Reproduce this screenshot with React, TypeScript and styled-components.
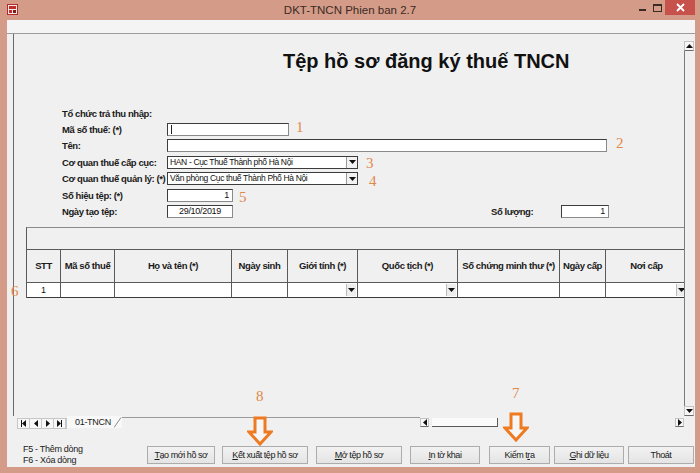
import styled, { createGlobalStyle } from 'styled-components';

const SANS = `"Liberation Sans", Arial, sans-serif`;
const SERIF = `"Liberation Serif", "Times New Roman", serif`;
const FRAME = '#d49c88';
const ORANGE = '#e0894a';

const GlobalStyle = createGlobalStyle`
  html, body { margin: 0; padding: 0; background: ${FRAME}; }
  body { width: 700px; height: 473px; overflow: hidden; }
`;

interface Column {
    title: string;
    width: number;
    dropdown?: boolean;
}

const columns: Column[] = [
    { title: 'STT', width: 34 },
    { title: 'Mã số thuế', width: 54 },
    { title: 'Họ và tên (*)', width: 117 },
    { title: 'Ngày sinh', width: 56 },
    { title: 'Giới tính (*)', width: 70, dropdown: true },
    { title: 'Quốc tịch (*)', width: 100, dropdown: true },
    { title: 'Số chứng minh thư (*)', width: 102 },
    { title: 'Ngày cấp', width: 46 },
    { title: 'Nơi cấp', width: 82, dropdown: true },
];

interface FooterButton {
    key: string;
    label: React.ReactNode;
    width: number;
    gap: number;
}

const buttons: FooterButton[] = [
    { key: 'tao', label: <><u>T</u>ạo mới hồ sơ</>, width: 68, gap: 0 },
    { key: 'ket', label: <><u>K</u>ết xuất tệp hồ sơ</>, width: 86, gap: 7 },
    { key: 'mo', label: <><u>M</u>ở tệp hồ sơ</>, width: 86, gap: 8 },
    { key: 'in', label: <><u>I</u>n tờ khai</>, width: 70, gap: 8 },
    { key: 'kiem', label: <>Kiểm t<u>r</u>a</>, width: 61, gap: 9 },
    { key: 'ghi', label: <><u>G</u>hi dữ liệu</>, width: 70, gap: 4 },
    { key: 'thoat', label: <>Thoát</>, width: 66, gap: 4 },
];

const notes = [
    { n: '1', x: 296, y: 120 },
    { n: '2', x: 616, y: 136 },
    { n: '3', x: 366, y: 156 },
    { n: '4', x: 369, y: 174 },
    { n: '5', x: 239, y: 190 },
    { n: '6', x: 11, y: 284 },
    { n: '7', x: 512, y: 386 },
    { n: '8', x: 256, y: 389 },
];

function Tri({ dir }: { dir: 'up' | 'down' | 'left' | 'right' }) {
    const pts = {
        up: '0,4 3.5,0 7,4',
        down: '0,0 7,0 3.5,4',
        left: '4,0 4,7 0,3.5',
        right: '0,0 0,7 4,3.5',
    }[dir];
    const vertical = dir === 'up' || dir === 'down';
    return (
        <svg width={vertical ? 7 : 4} height={vertical ? 4 : 7} viewBox={vertical ? '0 0 7 4' : '0 0 4 7'}>
            <polygon points={pts} fill="#111" />
        </svg>
    );
}

function DownArrow() {
    return (
        <svg width="26" height="30" viewBox="0 0 26 30">
            <path d="M8 2 H18 V16 H24 L13 28 L2 16 H8 Z" fill="#f6f6f6" stroke="#ee7a22" strokeWidth="3" strokeLinejoin="miter" />
        </svg>
    );
}

export default function App() {
    return (
        <Window>
            <GlobalStyle />
            <TitleBar>
                <TitleLeft>
                    <svg width="11" height="11" viewBox="0 0 11 11">
                        <rect x="0.5" y="0.5" width="10" height="10" fill="#f4e9e6" stroke="#b32a2a" />
                        <rect x="2" y="2" width="7" height="3" fill="#c22b2b" />
                        <rect x="2" y="6" width="3" height="3" fill="#c22b2b" />
                        <rect x="6" y="6" width="3" height="3" fill="#7a1d1d" />
                    </svg>
                </TitleLeft>
                <TitleText>DKT-TNCN Phien ban 2.7</TitleText>
                <Controls>
                    <Ctrl>
                        <svg width="8" height="8" viewBox="0 0 8 8"><rect x="0" y="5" width="7" height="2" fill="#3a2a25" /></svg>
                    </Ctrl>
                    <Ctrl>
                        <svg width="9" height="8" viewBox="0 0 9 8"><rect x="0.5" y="0.5" width="8" height="7" fill="none" stroke="#3a2a25" /><rect x="0.5" y="0.5" width="8" height="1.5" fill="#3a2a25" /></svg>
                    </Ctrl>
                    <Close>
                        <svg width="9" height="9" viewBox="0 0 9 9"><path d="M1 1 L8 8 M8 1 L1 8" stroke="#fff" strokeWidth="1.8" /></svg>
                    </Close>
                </Controls>
            </TitleBar>
            <Client>
                <TopStrip />
                <Body>
                    <Sheet>
                        <Heading>Tệp hồ sơ đăng ký thuế TNCN</Heading>
                        <Form>
                            <Row>
                                <Label>Tổ chức trả thu nhập:</Label>
                            </Row>
                            <Row>
                                <Label>Mã số thuế: (*)</Label>
                                <Input $w={122}><Caret /></Input>
                            </Row>
                            <Row>
                                <Label>Tên:</Label>
                                <Input $w={440} />
                            </Row>
                            <Row>
                                <Label>Cơ quan thuế cấp cục:</Label>
                                <Select $w={191}>
                                    <SelectText>HAN - Cục Thuế Thành phố Hà Nội</SelectText>
                                    <SelectBtn><Tri dir="down" /></SelectBtn>
                                </Select>
                            </Row>
                            <Row>
                                <Label>Cơ quan thuế quản lý: (*)</Label>
                                <Select $w={191}>
                                    <SelectText>Văn phòng Cục thuế Thành Phố Hà Nội</SelectText>
                                    <SelectBtn><Tri dir="down" /></SelectBtn>
                                </Select>
                            </Row>
                            <Row>
                                <Label>Số hiệu tệp: (*)</Label>
                                <Input $w={66} $align="right">1</Input>
                            </Row>
                            <Row>
                                <Label>Ngày tạo tệp:</Label>
                                <Input $w={66} $align="center">29/10/2019</Input>
                                <Label $w={70} $ml={258}>Số lượng:</Label>
                                <Input $w={48} $align="right">1</Input>
                            </Row>
                        </Form>
                        <Table $cols={columns.map((c) => `${c.width}px`).join(' ')}>
                            <GroupRow />
                            {columns.map((c) => (
                                <HeadCell key={c.title}>{c.title}</HeadCell>
                            ))}
                            {columns.map((c, i) => (
                                <DataCell key={c.title}>
                                    {i === 0 ? '1' : ''}
                                    {c.dropdown && <CellBtn><Tri dir="down" /></CellBtn>}
                                </DataCell>
                            ))}
                        </Table>
                    </Sheet>
                    <VScroll>
                        <ScrollBtn $h={10}><Tri dir="up" /></ScrollBtn>
                        <VTrack />
                        <ScrollBtn $h={10}><Tri dir="down" /></ScrollBtn>
                    </VScroll>
                </Body>
                <TabBar>
                    <NavGroup>
                        <NavBtn><NavBar /><Tri dir="left" /></NavBtn>
                        <NavBtn><Tri dir="left" /></NavBtn>
                        <NavBtn><Tri dir="right" /></NavBtn>
                        <NavBtn><Tri dir="right" /><NavBar /></NavBtn>
                    </NavGroup>
                    <Tab>
                        01-TNCN
                        <svg width="8" height="11" viewBox="0 0 8 11"><path d="M0 10.5 L7 0.5" stroke="#8a8a8a" /></svg>
                    </Tab>
                    <TabFill />
                    <HScroll>
                        <ScrollBtn $w={9}><Tri dir="left" /></ScrollBtn>
                        <Thumb />
                        <HTrack />
                        <ScrollBtn $w={9}><Tri dir="right" /></ScrollBtn>
                    </HScroll>
                </TabBar>
                <Footer>
                    <Help>
                        <div>F5 - Thêm dòng</div>
                        <div>F6 - Xóa dòng</div>
                    </Help>
                    {buttons.map((b) => (
                        <Button key={b.key} $w={b.width} $gap={b.gap}>{b.label}</Button>
                    ))}
                </Footer>
            </Client>
            {notes.map((n) => (
                <Note key={n.n} style={{ left: n.x, top: n.y }}>{n.n}</Note>
            ))}
            <Callout style={{ left: 247, top: 416 }}><DownArrow /></Callout>
            <Callout style={{ left: 503, top: 412 }}><DownArrow /></Callout>
        </Window>
    );
}

const Window = styled.div`
    position: relative;
    width: 700px;
    height: 473px;
    background: ${FRAME};
    display: flex;
    flex-direction: column;
    font-family: ${SANS};
    overflow: hidden;
`;
const TitleBar = styled.div`
    height: 20px;
    flex: none;
    display: grid;
    grid-template-columns: 1fr auto 1fr;
    align-items: center;
`;
const TitleLeft = styled.div`
    display: flex;
    padding-left: 7px;
    margin-top: -1px;
`;
const TitleText = styled.div`
    font-size: 11.5px;
    color: #3a2a25;
    margin-top: -1px;
`;
const Controls = styled.div`
    display: flex;
    justify-content: flex-end;
    align-self: start;
    padding-right: 5px;
`;
const Ctrl = styled.div`
    width: 15px;
    height: 15px;
    display: flex;
    align-items: center;
    justify-content: center;
`;
const Close = styled.div`
    width: 30px;
    height: 15px;
    background: #c7514b;
    display: flex;
    align-items: center;
    justify-content: center;
`;
const Client = styled.div`
    flex: 1;
    min-height: 0;
    margin: 0 5px 6px 7px;
    background: #f0f0f0;
    display: flex;
    flex-direction: column;
`;
const TopStrip = styled.div`
    height: 13px;
    flex: none;
    background: #f4f4f4;
    border-bottom: 1px solid #9c9c9c;
`;
const Body = styled.div`
    height: 382px;
    flex: none;
    display: flex;
    padding-left: 6px;
`;
const Sheet = styled.div`
    flex: 1;
    min-width: 0;
    border-left: 1px solid #6a6a6a;
    overflow: hidden;
`;
const Heading = styled.div`
    padding: 16px 0 0 269px;
    font-size: 20px;
    line-height: 23px;
    font-weight: 700;
    color: #111;
    white-space: nowrap;
`;
const Form = styled.div`
    margin-top: 32px;
    padding-left: 48px;
    display: flex;
    flex-direction: column;
`;
const Row = styled.div`
    height: 16.4px;
    display: flex;
    align-items: center;
`;
const Label = styled.div<{ $w?: number; $ml?: number }>`
    width: ${(p) => p.$w ?? 105}px;
    margin-left: ${(p) => p.$ml ?? 0}px;
    flex: none;
    font-size: 9.5px;
    letter-spacing: -0.4px;
    font-weight: 700;
    color: #1a1a1a;
    white-space: nowrap;
`;
const Input = styled.div<{ $w: number; $align?: string }>`
    width: ${(p) => p.$w}px;
    height: 13px;
    box-sizing: border-box;
    flex: none;
    background: #fff;
    border: 1px solid #8a8a8a;
    border-top-color: #3c3c3c;
    border-left-color: #3c3c3c;
    font-size: 9px;
    letter-spacing: -0.3px;
    line-height: 11px;
    padding: 0 3px;
    color: #111;
    display: flex;
    align-items: center;
    justify-content: ${(p) => (p.$align === 'right' ? 'flex-end' : p.$align === 'center' ? 'center' : 'flex-start')};
`;
const Caret = styled.span`
    width: 1px;
    height: 9px;
    background: #222;
`;
const Select = styled.div<{ $w: number }>`
    width: ${(p) => p.$w}px;
    height: 13px;
    box-sizing: border-box;
    flex: none;
    background: #fff;
    border: 1px solid #3c3c3c;
    display: flex;
    align-items: stretch;
`;
const SelectText = styled.div`
    flex: 1;
    font-size: 8.5px;
    letter-spacing: -0.35px;
    line-height: 11px;
    padding-left: 2px;
    color: #111;
    white-space: nowrap;
    overflow: hidden;
`;
const SelectBtn = styled.div`
    width: 10px;
    border-left: 1px solid #9a9a9a;
    background: #f2f2f2;
    display: flex;
    align-items: center;
    justify-content: center;
`;
const Table = styled.div<{ $cols: string }>`
    margin: 7px 0 0 12px;
    width: 660px;
    display: grid;
    grid-template-columns: ${(p) => p.$cols};
    border-left: 1px solid #5a5a5a;
    border-top: 1px solid #8a8a8a;
`;
const GroupRow = styled.div`
    grid-column: 1 / -1;
    height: 21px;
    background: #f0f0f0;
    border-bottom: 1px solid #5a5a5a;
`;
const HeadCell = styled.div`
    height: 32px;
    border-right: 1px solid #5a5a5a;
    display: flex;
    align-items: center;
    justify-content: center;
    font-size: 9.5px;
    letter-spacing: -0.4px;
    font-weight: 700;
    color: #1a1a1a;
    white-space: nowrap;
`;
const DataCell = styled.div`
    position: relative;
    height: 14px;
    background: #fff;
    border-top: 1px solid #5a5a5a;
    border-bottom: 1px solid #3a3a3a;
    border-right: 1px solid #5a5a5a;
    display: flex;
    align-items: center;
    justify-content: center;
    font-size: 9px;
    color: #111;
`;
const CellBtn = styled.div`
    position: absolute;
    right: 1px;
    top: 1px;
    bottom: 1px;
    width: 9px;
    background: #eeeeee;
    border-left: 1px solid #bcbcbc;
    display: flex;
    align-items: center;
    justify-content: center;
`;
const VScroll = styled.div`
    width: 10px;
    flex: none;
    margin-right: 1px;
    padding-top: 7px;
    display: flex;
    flex-direction: column;
`;
const ScrollBtn = styled.div<{ $w?: number; $h?: number }>`
    width: ${(p) => (p.$w ? `${p.$w}px` : 'auto')};
    height: ${(p) => (p.$h ? `${p.$h}px` : 'auto')};
    flex: none;
    box-sizing: border-box;
    background: #f7f7f7;
    border: 1px solid #c4c4c4;
    border-bottom-color: #6c6c6c;
    display: flex;
    align-items: center;
    justify-content: center;
`;
const VTrack = styled.div`
    flex: 1;
    border-left: 1px solid #7c7c7c;
`;
const TabBar = styled.div`
    height: 12px;
    flex: none;
    display: flex;
    align-items: stretch;
    padding-left: 10px;
`;
const NavGroup = styled.div`
    display: flex;
    margin-top: 2px;
    height: 9px;
    border: 1px solid #c6c6c6;
    background: #f7f7f7;
`;
const NavBtn = styled.div`
    width: 11px;
    border-right: 1px solid #c6c6c6;
    display: flex;
    align-items: center;
    justify-content: center;
`;
const NavBar = styled.span`
    width: 1px;
    height: 7px;
    background: #111;
`;
const Tab = styled.div`
    display: flex;
    align-items: flex-end;
    gap: 3px;
    padding-left: 8px;
    font-size: 9px;
    letter-spacing: -0.3px;
    line-height: 11px;
    color: #1a1a1a;
    background: #f8f8f8;
`;
const TabFill = styled.div`
    flex: 1;
    border-top: 1px solid #9a9a9a;
    margin-top: 1px;
`;
const HScroll = styled.div`
    width: 264px;
    margin-right: 11px;
    display: flex;
    align-items: stretch;
    padding: 2px 0 1px;
    gap: 3px;
`;
const Thumb = styled.div`
    width: 65px;
    background: #fbfbfb;
    border-bottom: 1px solid #5a5a5a;
    border-right: 1px solid #5a5a5a;
`;
const HTrack = styled.div`
    flex: 1;
`;
const Footer = styled.div`
    flex: 1;
    display: flex;
    align-items: center;
    padding: 14px 0 0 16px;
`;
const Help = styled.div`
    width: 124px;
    flex: none;
    font-size: 9px;
    letter-spacing: -0.3px;
    line-height: 11px;
    color: #1a1a1a;
`;
const Button = styled.div<{ $w: number; $gap: number }>`
    width: ${(p) => p.$w}px;
    margin-left: ${(p) => p.$gap}px;
    height: 18px;
    box-sizing: border-box;
    flex: none;
    border: 1px solid #acacac;
    background: linear-gradient(#f2f2f2, #e4e4e4);
    display: flex;
    align-items: center;
    justify-content: center;
    font-size: 9px;
    letter-spacing: -0.45px;
    color: #1a1a1a;
    white-space: nowrap;
`;
const Note = styled.div`
    position: absolute;
    font-family: ${SERIF};
    font-size: 15px;
    line-height: 15px;
    color: ${ORANGE};
`;
const Callout = styled.div`
    position: absolute;
    display: flex;
`;
